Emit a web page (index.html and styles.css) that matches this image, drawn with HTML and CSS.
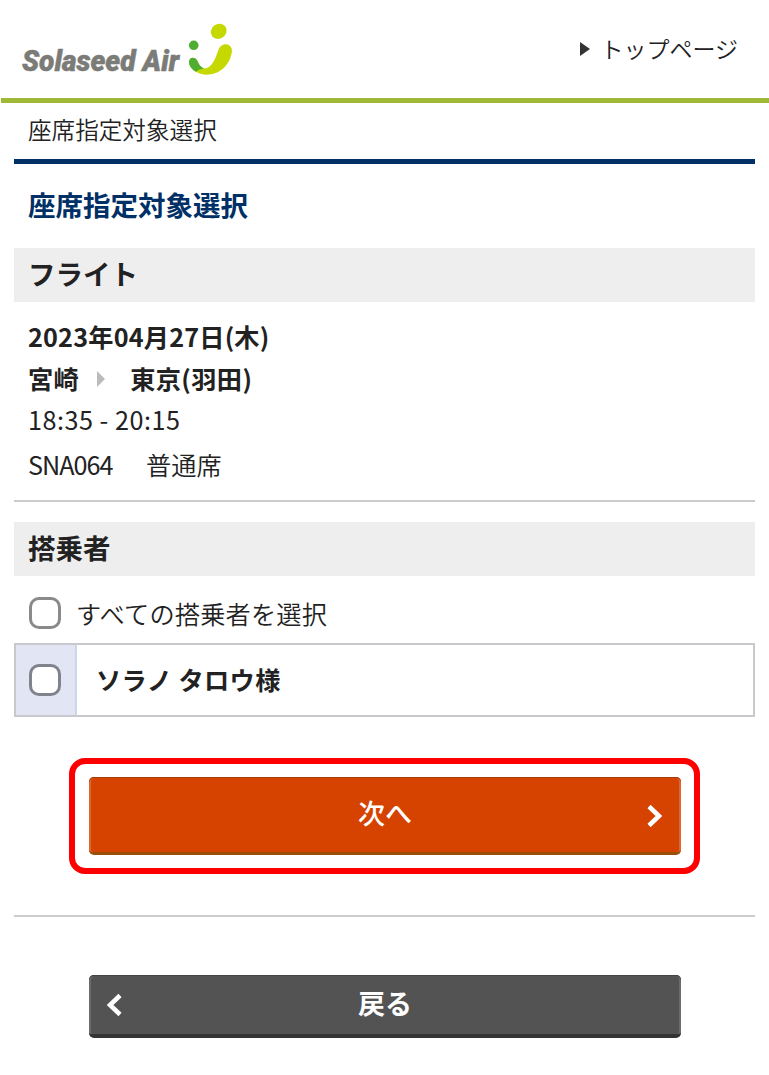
FILE: index.html
```html
<!DOCTYPE html>
<html lang="ja">

<head>
    <meta charset="UTF-8">
    <title>座席指定対象選択</title>
    <link rel="stylesheet" href="styles.css">
</head>

<body>
    <div class="header">
        <svg class="logo" width="216" height="60" viewBox="0 0 216 60">
            <text class="logo-text" x="1" y="50.500" textLength="157" lengthAdjust="spacingAndGlyphs">Solaseed Air</text>
            <circle cx="172.700" cy="25.300" r="4.800" fill="#4fae32" />
            <ellipse cx="197.700" cy="11.300" rx="8.200" ry="7.300" fill="#c5d900" transform="rotate(-35 197.700 11.300)" />
            <path d="M168 42C168 37 174 36 176.500 41C178 45 180 48 184 48.500C191 47 194 40 197 31C200 21 211 23 211 31C209 46 198 55 185 54.700C175 54 168 48 168 42Z" fill="#c5d900" />
            <path d="M168 42C168 37 174 36 176.500 41C178 45 180 47 183 48.500Q178 49 175 51.800C170 49 168 45 168 42Z" fill="#4fae32" />
        </svg>
        <a class="top-link">トップページ</a>
    </div>
    <div class="main">
        <div class="crumb">座席指定対象選択</div>
        <h1>座席指定対象選択</h1>
        <h2>フライト</h2>
        <div class="flight">
            <p class="date">2023年04月27日(木)</p>
            <p class="route"><span>宮崎</span><i class="arrow"></i><span>東京(羽田)</span></p>
            <p class="time">18:35 - 20:15</p>
            <p class="seat"><span class="flight-no">SNA064</span><span class="seat-type">普通席</span></p>
        </div>
        <h2>搭乗者</h2>
        <label class="check-all"><input type="checkbox"><span>すべての搭乗者を選択</span></label>
        <label class="person">
            <span class="person-check"><input type="checkbox"></span>
            <span class="person-name">ソラノ タロウ様</span>
        </label>
        <div class="next-box">
            <button class="btn next" type="button">次へ
                <svg class="icon" width="16" height="24" viewBox="0 0 16 24">
                    <path d="M2 2.500L12 12L2 21.500" />
                </svg>
            </button>
        </div>
        <div class="back-box">
            <button class="btn back" type="button">戻る
                <svg class="icon" width="16" height="24" viewBox="0 0 16 24">
                    <path d="M14 2.500L4 12L14 21.500" />
                </svg>
            </button>
        </div>
    </div>
</body>

</html>
```
FILE: styles.css
```css
* {
    margin: 0;
    padding: 0;
    box-sizing: border-box;
}

body {
    background-color: #fff;
    color: #222;
    font-family: "Noto Sans CJK JP", sans-serif;
    font-size: 25.2px;
}

.header {
    display: flex;
    justify-content: space-between;
    height: 103px;
    margin-left: 1px;
    padding: 20px 31px 0 20px;
    border-bottom: 5px solid #9fb937;
}

.logo-text {
    font-family: Roboto, sans-serif;
    font-size: 29px;
    font-weight: 900;
    font-style: italic;
    fill: #7b7b77;
    stroke: #7b7b77;
    stroke-width: 0.5;
}

.top-link {
    display: flex;
    align-items: center;
    height: 56px;
    font-size: 23px;
    font-weight: 350;
}

.top-link::before {
    content: "";
    margin: 2px 10px 0 0;
    border-left: 10px solid #333;
    border-top: 7px solid transparent;
    border-bottom: 7px solid transparent;
}

.main {
    padding: 0 14px;
}

.crumb {
    height: 61px;
    padding-left: 14px;
    border-bottom: 5px solid #003066;
    font-size: 23.6px;
    font-weight: 350;
    line-height: 52px;
}

h1 {
    height: 84px;
    padding-left: 14px;
    color: #003066;
    font-size: 27.5px;
    font-weight: 700;
    line-height: 80px;
}

h2 {
    height: 54px;
    padding-left: 14px;
    background-color: #eee;
    font-size: 27.5px;
    font-weight: 700;
    line-height: 51px;
}

.flight {
    height: 200px;
    margin-bottom: 20px;
    padding: 13px 14px 0;
    border-bottom: 2px solid #ccc;
}

.date,
.route {
    height: 42px;
    font-weight: 700;
    line-height: 42px;
}

.date {
    letter-spacing: 0.2px;
}

.route {
    display: flex;
    align-items: center;
    letter-spacing: 0.4px;
}

.arrow {
    margin: 2px 25px 0 18px;
    border-left: 8px solid #bbb;
    border-top: 8px solid transparent;
    border-bottom: 8px solid transparent;
}

.time {
    height: 44px;
    line-height: 41px;
    letter-spacing: 0.5px;
}

.seat {
    display: flex;
    line-height: 43px;
}

.flight-no {
    width: 85px;
    letter-spacing: -1px;
}

.seat-type {
    margin-left: 33px;
    font-weight: 350;
}

input {
    appearance: none;
    display: block;
    width: 32px;
    height: 32px;
    border: 3px solid #8a8a8a;
    border-radius: 10px;
    background-color: #fff;
}

.check-all {
    display: flex;
    align-items: center;
    gap: 15px;
    height: 67px;
    padding: 7px 15px 0;
    font-weight: 350;
    letter-spacing: 0.2px;
}

.person {
    display: flex;
    height: 74px;
    border: 2px solid #c9c9cd;
}

.person-check {
    display: flex;
    align-items: center;
    width: 61px;
    padding-left: 13px;
    border-right: 2px solid #ced5ea;
    background-color: #e2e6f4;
}

.person-check input {
    border-color: #80828c;
}

.person-name {
    padding-left: 19px;
    font-weight: 700;
    line-height: 69px;
    letter-spacing: 0.4px;
}

.next-box {
    margin: 41px 55px;
    padding: 13px 14px;
    border: 6px solid #f00;
    border-radius: 16px;
}

.btn {
    display: flex;
    align-items: center;
    justify-content: center;
    position: relative;
    width: 592px;
    padding-bottom: 4px;
    border: 0 none;
    border-radius: 5px;
    color: #fff;
    font-family: inherit;
    font-size: 27px;
    font-weight: 500;
}

.next {
    height: 78px;
    border-bottom: 3px solid #96500a;
    background-color: #d64200;
    box-shadow: inset 0 1px 0 #a93b0a, inset 2px 0 0 #dc672f, inset -2px 0 0 #dc672f;
}

.back {
    height: 63px;
    border-bottom: 4px solid #343434;
    background-color: #535353;
    box-shadow: inset 0 1px 0 #444, inset 2px 0 0 #6b6b6b, inset -2px 0 0 #6b6b6b;
    font-weight: 700;
}

.icon {
    position: absolute;
    fill: none;
    stroke: #fff;
    stroke-width: 4.5;
}

.next .icon {
    right: 18px;
    top: 27px;
}

.back .icon {
    left: 17px;
    top: 18px;
}

.back-box {
    padding: 58px 75px 0;
    border-top: 2px solid #ccc;
}
```
